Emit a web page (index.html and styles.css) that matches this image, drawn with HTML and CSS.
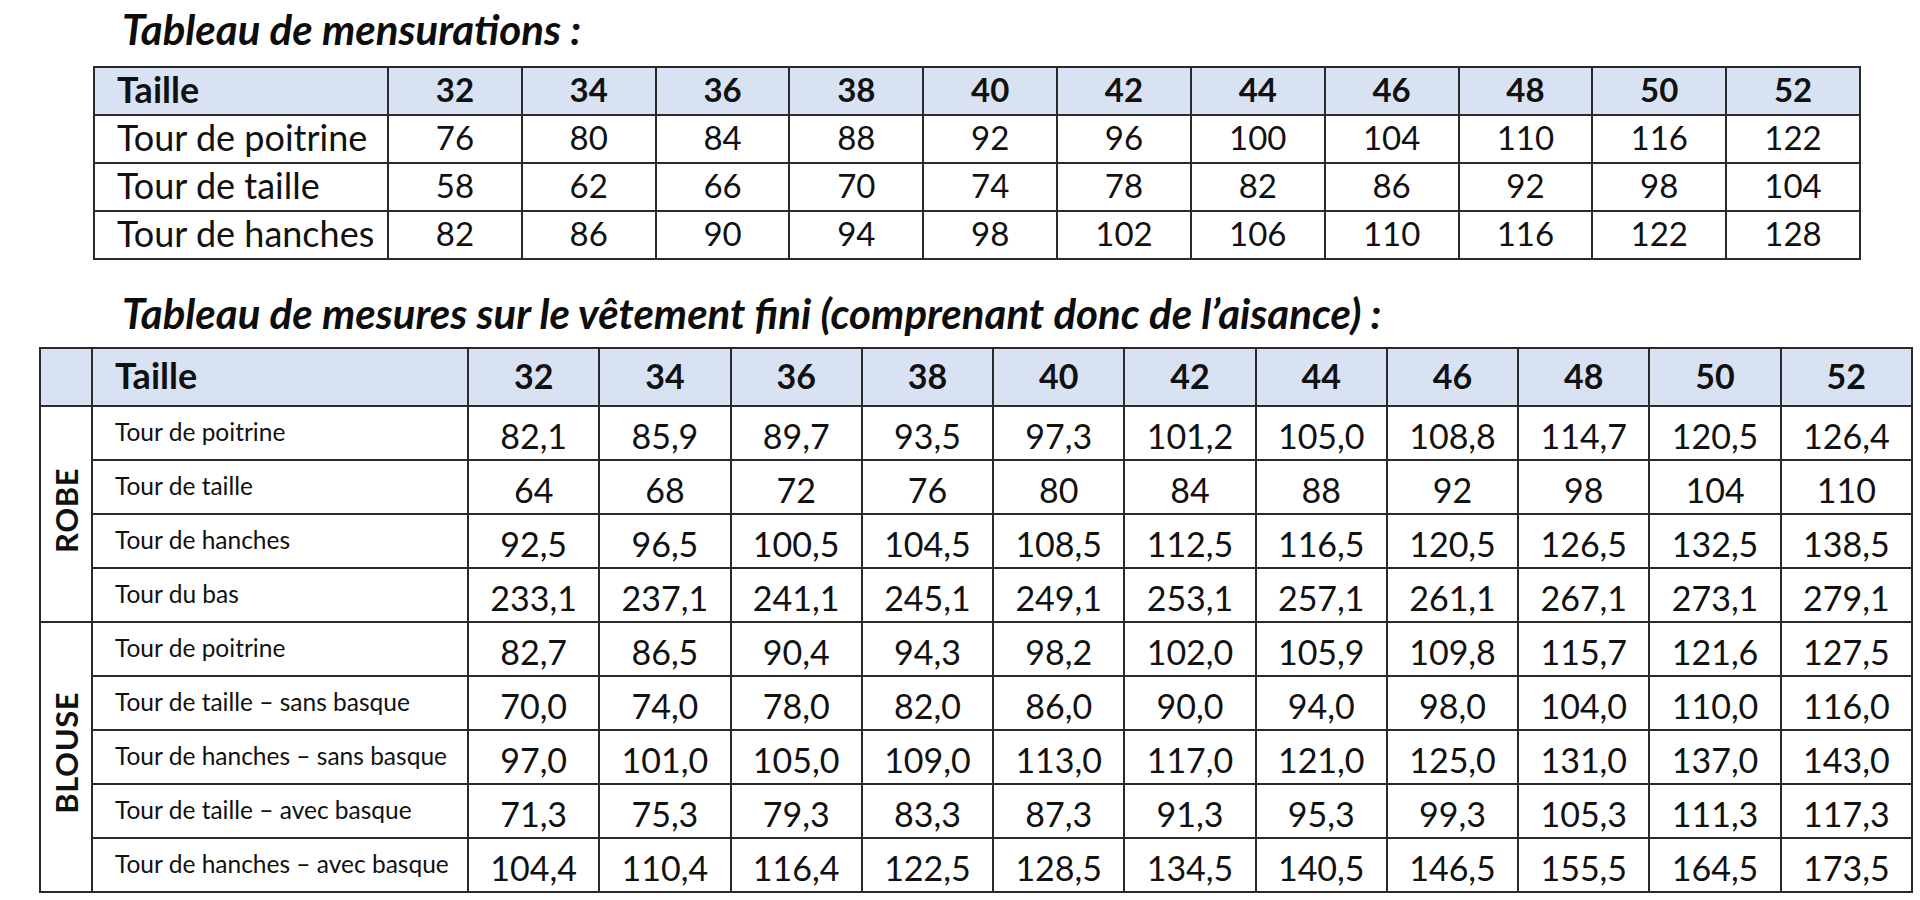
FILE: index.html
```html
<!DOCTYPE html>
<html lang="fr">
<head>
<meta charset="utf-8">
<title>Tableaux de mesures</title>
<link rel="stylesheet" href="styles.css">
</head>
<body>
<main class="page">
  <h2 class="title t1">Tableau de mensurations :</h2>
  <table class="grid g1">
    <colgroup><col class="c-label1"><col span="11"></colgroup>
    <thead>
      <tr class="head"><th class="lbl">Taille</th><th>32</th><th>34</th><th>36</th><th>38</th><th>40</th><th>42</th><th>44</th><th>46</th><th>48</th><th>50</th><th>52</th></tr>
    </thead>
    <tbody>
      <tr><td class="lbl">Tour de poitrine</td><td>76</td><td>80</td><td>84</td><td>88</td><td>92</td><td>96</td><td>100</td><td>104</td><td>110</td><td>116</td><td>122</td></tr>
      <tr><td class="lbl">Tour de taille</td><td>58</td><td>62</td><td>66</td><td>70</td><td>74</td><td>78</td><td>82</td><td>86</td><td>92</td><td>98</td><td>104</td></tr>
      <tr><td class="lbl">Tour de hanches</td><td>82</td><td>86</td><td>90</td><td>94</td><td>98</td><td>102</td><td>106</td><td>110</td><td>116</td><td>122</td><td>128</td></tr>
    </tbody>
  </table>

  <h2 class="title t2">Tableau de mesures sur le vêtement fini (comprenant donc de l’aisance) :</h2>
  <table class="grid g2">
    <colgroup><col class="c-group"><col class="c-label2"><col span="11"></colgroup>
    <thead>
      <tr class="head"><th class="grp"></th><th class="lbl">Taille</th><th>32</th><th>34</th><th>36</th><th>38</th><th>40</th><th>42</th><th>44</th><th>46</th><th>48</th><th>50</th><th>52</th></tr>
    </thead>
    <tbody>
      <tr><td class="grp" rowspan="4"><span class="vert">ROBE</span></td><td class="lbl">Tour de poitrine</td><td>82,1</td><td>85,9</td><td>89,7</td><td>93,5</td><td>97,3</td><td>101,2</td><td>105,0</td><td>108,8</td><td>114,7</td><td>120,5</td><td>126,4</td></tr>
      <tr><td class="lbl">Tour de taille</td><td>64</td><td>68</td><td>72</td><td>76</td><td>80</td><td>84</td><td>88</td><td>92</td><td>98</td><td>104</td><td>110</td></tr>
      <tr><td class="lbl">Tour de hanches</td><td>92,5</td><td>96,5</td><td>100,5</td><td>104,5</td><td>108,5</td><td>112,5</td><td>116,5</td><td>120,5</td><td>126,5</td><td>132,5</td><td>138,5</td></tr>
      <tr><td class="lbl">Tour du bas</td><td>233,1</td><td>237,1</td><td>241,1</td><td>245,1</td><td>249,1</td><td>253,1</td><td>257,1</td><td>261,1</td><td>267,1</td><td>273,1</td><td>279,1</td></tr>
      <tr><td class="grp" rowspan="5"><span class="vert">BLOUSE</span></td><td class="lbl">Tour de poitrine</td><td>82,7</td><td>86,5</td><td>90,4</td><td>94,3</td><td>98,2</td><td>102,0</td><td>105,9</td><td>109,8</td><td>115,7</td><td>121,6</td><td>127,5</td></tr>
      <tr><td class="lbl">Tour de taille – sans basque</td><td>70,0</td><td>74,0</td><td>78,0</td><td>82,0</td><td>86,0</td><td>90,0</td><td>94,0</td><td>98,0</td><td>104,0</td><td>110,0</td><td>116,0</td></tr>
      <tr><td class="lbl">Tour de hanches – sans basque</td><td>97,0</td><td>101,0</td><td>105,0</td><td>109,0</td><td>113,0</td><td>117,0</td><td>121,0</td><td>125,0</td><td>131,0</td><td>137,0</td><td>143,0</td></tr>
      <tr><td class="lbl">Tour de taille – avec basque</td><td>71,3</td><td>75,3</td><td>79,3</td><td>83,3</td><td>87,3</td><td>91,3</td><td>95,3</td><td>99,3</td><td>105,3</td><td>111,3</td><td>117,3</td></tr>
      <tr><td class="lbl">Tour de hanches – avec basque</td><td>104,4</td><td>110,4</td><td>116,4</td><td>122,5</td><td>128,5</td><td>134,5</td><td>140,5</td><td>146,5</td><td>155,5</td><td>164,5</td><td>173,5</td></tr>
    </tbody>
  </table>
</main>
</body>
</html>
```
FILE: styles.css
```css
html, body {
  margin: 0;
  padding: 0;
  background: #ffffff;
}

body {
  font-family: Lato, "Open Sans", sans-serif;
  color: #111111;
}

.page {
  padding-top: 7px;
}

.title {
  margin: 0 0 0 122px;
  font-family: Lato, sans-serif;
  font-style: italic;
  font-weight: 700;
  font-size: 42px;
  line-height: 44px;
  color: #0d0d0d;
}

.grid {
  border-collapse: collapse;
  table-layout: fixed;
}

.grid th,
.grid td {
  border: 2px solid #2a2a2a;
  padding: 0;
  text-align: center;
  vertical-align: top;
  line-height: 1.2;
  white-space: nowrap;
}

.head th {
  background: #d9e2f3;
  font-weight: 700;
}

/* Table 1 */
.g1 {
  width: 1768px;
  margin: 15px 0 0 93px;
}

.g1 .c-label1 {
  width: 294px;
}

.g1 th,
.g1 td {
  height: 48px;
  font-size: 33px;
  padding-top: 2px;
  box-sizing: border-box;
}

.g1 .lbl {
  text-align: left;
  padding-left: 22px;
  padding-top: 0;
  font-size: 36px;
}

/* Table 2 */
.t2 {
  margin-top: 31px;
}

.g2 {
  width: 1874px;
  margin: 12px 0 0 39px;
}

.g2 .c-group {
  width: 52px;
}

.g2 .c-label2 {
  width: 376px;
}

.g2 th {
  height: 58px;
  font-size: 34px;
  padding-top: 7px;
  box-sizing: border-box;
}

.g2 td {
  height: 54px;
  font-size: 34px;
  padding-top: 9px;
  box-sizing: border-box;
}

.g2 td.lbl {
  font-size: 24.5px;
  padding-top: 10px;
}

.g2 .lbl {
  text-align: left;
  padding-left: 22px;
}

.g2 th.lbl {
  font-size: 36px;
  padding-top: 5px;
}

.g2 td.grp {
  vertical-align: middle;
  padding: 0;
}

.vert {
  display: inline-block;
  writing-mode: vertical-rl;
  transform: rotate(180deg);
  font-weight: 700;
  font-size: 31px;
  line-height: 1;
  letter-spacing: 0.5px;
}
```
